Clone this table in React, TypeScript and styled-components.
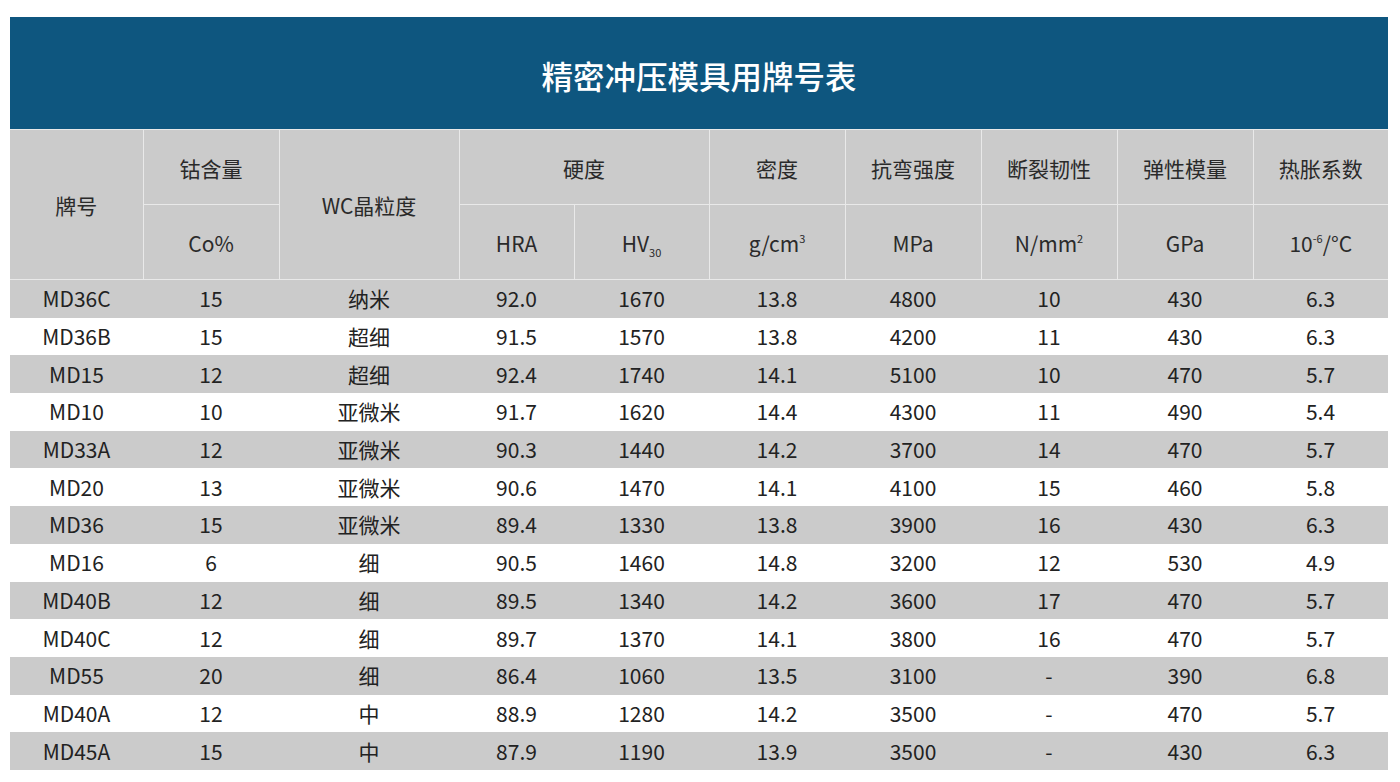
import React from "react";
import styled, { createGlobalStyle } from "styled-components";

const GlobalStyle = createGlobalStyle`
  html, body {
    margin: 0;
    padding: 0;
    background: #ffffff;
  }
  body {
    font-family: "Noto Sans CJK SC", "Noto Sans", sans-serif;
    color: #222222;
  }
`;

const Page = styled.div`
  padding: 17px 12px 0 10px;
  width: 1378px;
`;

const Title = styled.div`
  height: 112px;
  background: #0e567f;
  color: #ffffff;
  font-size: 31.5px;
  font-weight: 500;
  display: flex;
  align-items: center;
  justify-content: center;
  padding-top: 4px;
  box-sizing: border-box;
`;

const Table = styled.table`
  width: 1378px;
  border-collapse: collapse;
  table-layout: fixed;
  font-size: 21px;
`;

const HeadCell = styled.th`
  background: #cbcbcb;
  border: 1px solid #e9e9e9;
  font-weight: 400;
  height: 71px;
  padding: 3px 0 0;
  line-height: 1.2;
  text-align: center;
  vertical-align: middle;
  color: #2a2a2a;
  &:first-child { border-left: none; }
  &:last-child { border-right: none; }
`;

const Sup = styled.sup`
  font-size: 11px;
  vertical-align: 9px;
  line-height: 0;
`;

const Sub = styled.sub`
  font-size: 11px;
  vertical-align: -5px;
  line-height: 0;
`;

const Row = styled.tr<{ $shade: boolean }>`
  background: ${(p) => (p.$shade ? "#cbcbcb" : "#ffffff")};
`;

const Cell = styled.td`
  height: 37.7px;
  padding: 0;
  text-align: center;
  vertical-align: middle;
  line-height: 1;
  color: #222222;
`;

const widths = [133, 136, 180, 115, 135, 136, 136, 136, 136, 135];

const rows: string[][] = [
  ["MD36C", "15", "纳米", "92.0", "1670", "13.8", "4800", "10", "430", "6.3"],
  ["MD36B", "15", "超细", "91.5", "1570", "13.8", "4200", "11", "430", "6.3"],
  ["MD15", "12", "超细", "92.4", "1740", "14.1", "5100", "10", "470", "5.7"],
  ["MD10", "10", "亚微米", "91.7", "1620", "14.4", "4300", "11", "490", "5.4"],
  ["MD33A", "12", "亚微米", "90.3", "1440", "14.2", "3700", "14", "470", "5.7"],
  ["MD20", "13", "亚微米", "90.6", "1470", "14.1", "4100", "15", "460", "5.8"],
  ["MD36", "15", "亚微米", "89.4", "1330", "13.8", "3900", "16", "430", "6.3"],
  ["MD16", "6", "细", "90.5", "1460", "14.8", "3200", "12", "530", "4.9"],
  ["MD40B", "12", "细", "89.5", "1340", "14.2", "3600", "17", "470", "5.7"],
  ["MD40C", "12", "细", "89.7", "1370", "14.1", "3800", "16", "470", "5.7"],
  ["MD55", "20", "细", "86.4", "1060", "13.5", "3100", "-", "390", "6.8"],
  ["MD40A", "12", "中", "88.9", "1280", "14.2", "3500", "-", "470", "5.7"],
  ["MD45A", "15", "中", "87.9", "1190", "13.9", "3500", "-", "430", "6.3"],
];

export default function App() {
  return (
    <>
      <GlobalStyle />
      <Page>
        <Title>精密冲压模具用牌号表</Title>
        <Table>
          <colgroup>
            {widths.map((w, i) => (
              <col key={i} style={{ width: w }} />
            ))}
          </colgroup>
          <thead>
            <tr>
              <HeadCell rowSpan={2}>牌号</HeadCell>
              <HeadCell>钴含量</HeadCell>
              <HeadCell rowSpan={2}>WC晶粒度</HeadCell>
              <HeadCell colSpan={2}>硬度</HeadCell>
              <HeadCell>密度</HeadCell>
              <HeadCell>抗弯强度</HeadCell>
              <HeadCell>断裂韧性</HeadCell>
              <HeadCell>弹性模量</HeadCell>
              <HeadCell>热胀系数</HeadCell>
            </tr>
            <tr>
              <HeadCell>Co%</HeadCell>
              <HeadCell>HRA</HeadCell>
              <HeadCell>
                HV<Sub>30</Sub>
              </HeadCell>
              <HeadCell>
                g/cm<Sup>3</Sup>
              </HeadCell>
              <HeadCell>MPa</HeadCell>
              <HeadCell>
                N/mm<Sup>2</Sup>
              </HeadCell>
              <HeadCell>GPa</HeadCell>
              <HeadCell>
                10<Sup>-6</Sup>/°C
              </HeadCell>
            </tr>
          </thead>
          <tbody>
            {rows.map((r, i) => (
              <Row key={r[0]} $shade={i % 2 === 0}>
                {r.map((c, j) => (
                  <Cell key={j}>{c}</Cell>
                ))}
              </Row>
            ))}
          </tbody>
        </Table>
      </Page>
    </>
  );
}
